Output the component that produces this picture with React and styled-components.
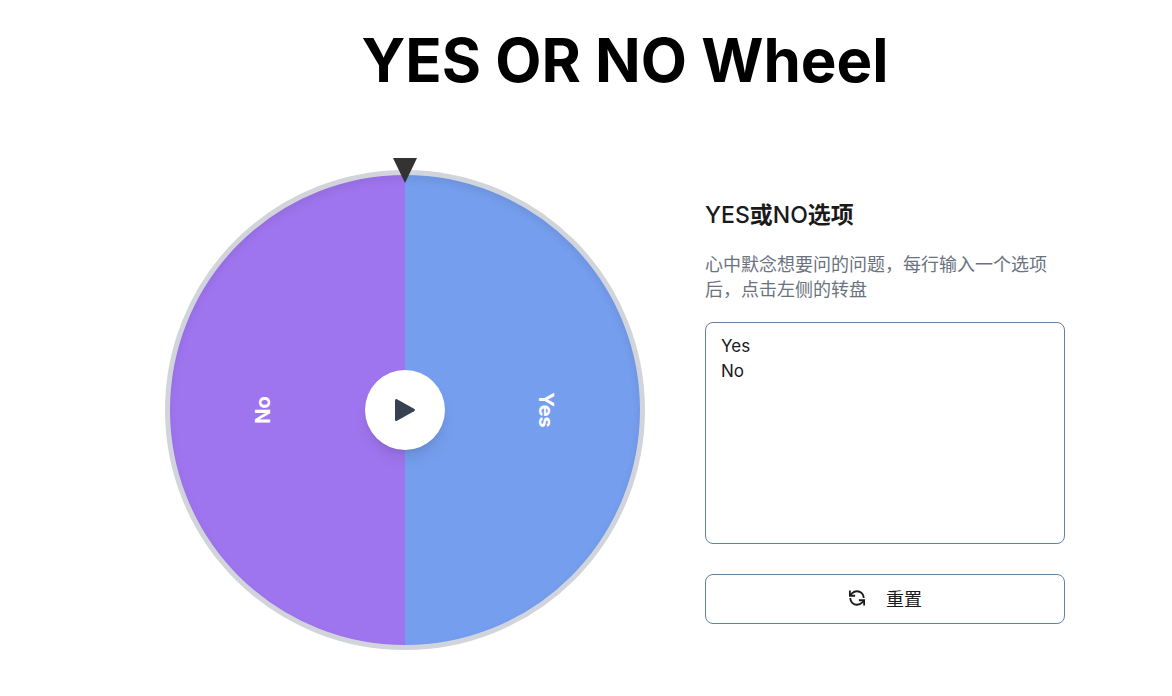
import React, { useState } from 'react';
import styled, { createGlobalStyle } from 'styled-components';

const DEFAULT_OPTIONS = 'Yes\nNo';
const COLORS = ['#759eee', '#9f75ef'];

function App() {
	const [options, setOptions] = useState(DEFAULT_OPTIONS);
	const [angle, setAngle] = useState(0);

	const [first = '', second = ''] = options.split('\n');

	const spin = () => setAngle(angle + 1440 + Math.floor(Math.random() * 360));

	const reset = () => {
		setOptions(DEFAULT_OPTIONS);
		setAngle(0);
	};

	return (
		<Page>
			<GlobalStyle />
			<Title>YES OR NO Wheel</Title>

			<Content>
				<WheelBox>
					<Wheel viewBox="0 0 480 480" style={{ transform: `rotate(${angle}deg)` }}>
						<path d="M240 4A236 236 0 0 1 240 476Z" fill={COLORS[0]} />
						<path d="M240 4A236 236 0 0 0 240 476Z" fill={COLORS[1]} />
						<Label transform="translate(381 240) rotate(90)">{first}</Label>
						<Label transform="translate(98 240) rotate(-90)">{second}</Label>
					</Wheel>
					<Rim />
					<Pointer viewBox="0 0 24 25">
						<path d="M0 0H24L12 25Z" fill="#333" />
					</Pointer>
					<SpinButton type="button" aria-label="Spin" onClick={spin}>
						<svg width="24" height="24" viewBox="0 0 24 24">
							<path d="M2 2.5Q2 .3 4 1.2L21 10.8Q23 12 21 13.2L4 22.8Q2 23.7 2 21.5Z" fill="#374151" />
						</svg>
					</SpinButton>
				</WheelBox>

				<Panel>
					<PanelTitle>YES<b>或</b>NO<b>选项</b></PanelTitle>
					<Hint htmlFor="options">心中默念想要问的问题，每行输入一个选项后，点击左侧的转盘</Hint>
					<OptionsInput
						id="options"
						spellCheck={false}
						value={options}
						onChange={e => setOptions(e.target.value)}
					/>
					<ResetButton type="button" onClick={reset}>
						<svg width="18" height="18" viewBox="0 0 24 24" fill="none" stroke="currentColor" strokeWidth="2.4">
							<path d="M21 12a9 9 0 0 0-9-9 9.75 9.75 0 0 0-6.74 2.74L3 8" />
							<path d="M2.5 2v7h7" />
							<path d="M3 12a9 9 0 0 0 9 9 9.75 9.75 0 0 0 6.74-2.74L21 16" />
							<path d="M14.5 15h7v7" />
						</svg>
						重置
					</ResetButton>
				</Panel>
			</Content>
		</Page>
	);
}

export default App;

const GlobalStyle = createGlobalStyle`
  *, *::before, *::after {
    box-sizing: border-box;
  }

  body {
    margin: 0;
    background: #fff;
    color: #1a1a1a;
    font-family: Inter, "Noto Sans CJK SC", sans-serif;
  }

  button, textarea {
    font: inherit;
    color: inherit;
  }
`;

const Page = styled.main`
  padding: 24px 87px 40px 165px;
`;

const Title = styled.h1`
  margin: 0;
  color: #000;
  font-size: 60px;
  font-weight: 700;
  line-height: 72px;
  text-align: center;
`;

const Content = styled.div`
  display: flex;
  align-items: flex-start;
  gap: 60px;
  margin-top: 74px;
`;

const WheelBox = styled.div`
  position: relative;
  flex: 0 0 480px;
`;

const Wheel = styled.svg`
  display: block;
  width: 100%;
  transition: transform 4s ease-out;
`;

const Label = styled.text`
  fill: #fff;
  font-size: 20px;
  font-weight: 700;
  text-anchor: middle;
  dominant-baseline: central;
`;

// stays still while the wheel turns, so the shading keeps its side
const Rim = styled.div`
  position: absolute;
  inset: 0;
  border: 5px solid #d1d5db;
  border-radius: 50%;
  box-shadow: inset 0 4px 8px rgba(0, 0, 0, 0.08);
  pointer-events: none;
`;

const Pointer = styled.svg`
  position: absolute;
  top: -12px;
  left: 50%;
  width: 24px;
  height: 25px;
  transform: translateX(-50%);
`;

const SpinButton = styled.button`
  position: absolute;
  top: 50%;
  left: 50%;
  display: flex;
  align-items: center;
  justify-content: center;
  width: 80px;
  height: 80px;
  padding: 0;
  border: 0;
  border-radius: 50%;
  background: #fff;
  box-shadow: 0 10px 15px -3px rgba(0, 0, 0, 0.1), 0 4px 6px -4px rgba(0, 0, 0, 0.1);
  transform: translate(-50%, -50%);
  cursor: pointer;
`;

const Panel = styled.section`
  display: flex;
  flex: 1;
  flex-direction: column;
  padding: 28px 20px 0 0;
`;

const PanelTitle = styled.h2`
  margin: 0;
  font-size: 23px;
  font-weight: 500;
  line-height: 34px;

  b {
    font-weight: 700;
  }
`;

const Hint = styled.label`
  margin-top: 20px;
  color: #6b7280;
  font-size: 18px;
  font-weight: 400;
  line-height: 25px;
`;

const OptionsInput = styled.textarea`
  height: 222px;
  margin-top: 20px;
  padding: 11px 15px;
  border: 1px solid #64829b;
  border-radius: 8px;
  outline: none;
  background: #fff;
  font-size: 17px;
  font-weight: 400;
  line-height: 25px;
  resize: none;
`;

const ResetButton = styled.button`
  display: flex;
  align-items: center;
  justify-content: center;
  gap: 20px;
  height: 50px;
  margin-top: 30px;
  padding-bottom: 3px;
  border: 1px solid #64829b;
  border-radius: 8px;
  background: #fff;
  font-size: 18px;
  font-weight: 400;
  cursor: pointer;
`;
